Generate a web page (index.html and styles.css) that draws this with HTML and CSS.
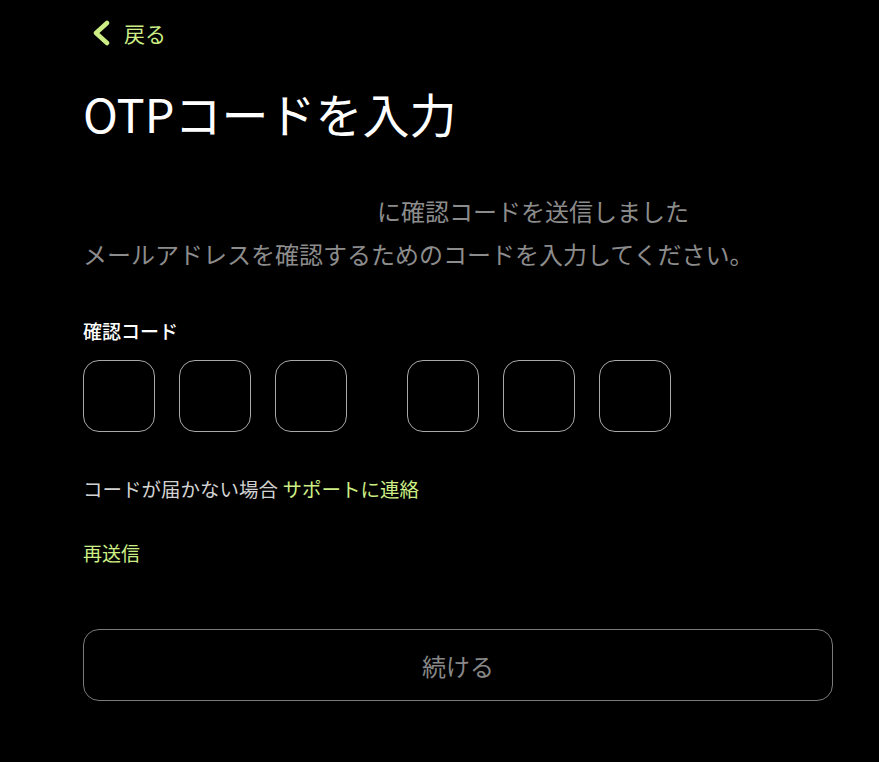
FILE: index.html
```html
<!DOCTYPE html>
<html lang="ja">
<head>
    <meta charset="UTF-8">
    <meta name="viewport" content="width=device-width, initial-scale=1.0">
    <title>OTPコードを入力</title>
    <link rel="stylesheet" href="styles.css">
</head>
<body>
    <div class="page">
        <a class="back" href="#">
            <svg class="back-icon" width="18" height="26" viewBox="0 0 18 26">
                <polyline points="15,3 4,13 15,23" fill="none" stroke="currentColor" stroke-width="4.5" stroke-linecap="round" stroke-linejoin="round"/>
            </svg>
            <span>戻る</span>
        </a>

        <h1 class="title">OTPコードを入力</h1>

        <p class="sub"><span class="email"></span>に確認コードを送信しました</p>
        <p class="sub">メールアドレスを確認するためのコードを入力してください。</p>

        <label class="label" for="otp-1">確認コード</label>
        <div class="otp">
            <div class="otp-group">
                <input class="otp-box" id="otp-1" type="text" maxlength="1">
                <input class="otp-box" type="text" maxlength="1">
                <input class="otp-box" type="text" maxlength="1">
            </div>
            <div class="otp-group">
                <input class="otp-box" type="text" maxlength="1">
                <input class="otp-box" type="text" maxlength="1">
                <input class="otp-box" type="text" maxlength="1">
            </div>
        </div>

        <p class="help">コードが届かない場合 <a class="link" href="#">サポートに連絡</a></p>

        <a class="resend link" href="#">再送信</a>

        <button class="submit" disabled>続ける</button>
    </div>
</body>
</html>
```

FILE: styles.css
```css
body {
    margin: 0;
    background-color: #000;
    color: #fff;
    font-family: "Noto Sans CJK JP", "Noto Sans", sans-serif;
}
.page {
    width: 750px;
    padding: 18px 0 0 83px;
}
.back {
    display: flex;
    align-items: center;
    gap: 14px;
    height: 30px;
    padding-left: 9px;
    color: #cdee85;
    font-size: 21px;
    text-decoration: none;
}
.title {
    margin: 35px 0 0;
    font-size: 47px;
    font-weight: 400;
    line-height: 60px;
}
.sub {
    margin: 0;
    color: #8c8c8c;
    font-size: 24px;
    line-height: 43px;
}
.title + .sub {
    margin-top: 46px;
}
.email {
    display: inline-block;
    width: 294px;
}
.label {
    display: block;
    margin-top: 44px;
    font-size: 19px;
    font-weight: 500;
    line-height: 24px;
}
.otp {
    display: flex;
    gap: 60px;
    margin-top: 17px;
}
.otp-group {
    display: flex;
    gap: 24px;
}
.otp-box {
    width: 72px;
    height: 72px;
    box-sizing: border-box;
    border: 1px solid #a8a8a8;
    border-radius: 16px;
    background: transparent;
    color: #fff;
    font-size: 28px;
    text-align: center;
    outline: none;
}
.help {
    margin: 43px 0 0;
    color: #d2d2d2;
    font-size: 19.5px;
    line-height: 28px;
}
.link {
    color: #cdee85;
    text-decoration: none;
}
.resend {
    display: block;
    margin-top: 36px;
    font-size: 19px;
    line-height: 28px;
}
.submit {
    display: block;
    width: 100%;
    height: 72px;
    margin-top: 62px;
    border: 1px solid #7a7a7a;
    border-radius: 16px;
    background: transparent;
    color: #888;
    font-family: inherit;
    font-size: 24px;
}
```
